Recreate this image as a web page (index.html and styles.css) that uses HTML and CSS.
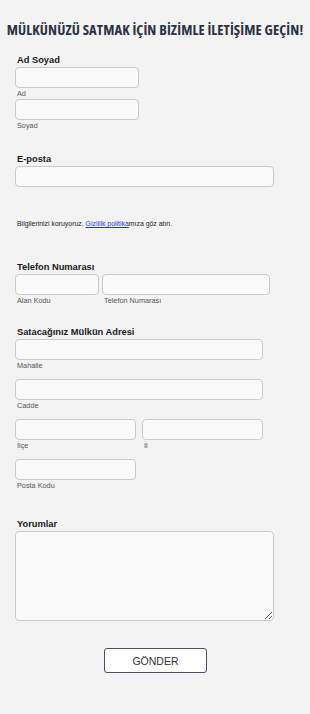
FILE: index.html
```html
<!DOCTYPE html>
<html lang="tr">
<head>
	<meta charset="UTF-8">
	<title>İletişim</title>
	<link rel="stylesheet" href="styles.css">
</head>
<body>
	<div class="page">
		<h1 class="title">MÜLKÜNÜZÜ SATMAK İÇİN BİZİMLE İLETİŞİME GEÇİN!</h1>
		<form class="form">
			<div class="section sec-name">
				<div class="label">Ad Soyad</div>
				<input type="text" class="input half">
				<div class="sub">Ad</div>
				<input type="text" class="input half">
				<div class="sub">Soyad</div>
			</div>

			<div class="section sec-mail">
				<div class="label">E-posta</div>
				<input type="text" class="input full">
			</div>

			<p class="privacy">Bilgilerinizi koruyoruz. <a href="#">Gizlilik politika</a>mıza göz atın.</p>

			<div class="section sec-phone">
				<div class="label">Telefon Numarası</div>
				<div class="row phone">
					<div class="col code">
						<input type="text" class="input">
						<div class="sub">Alan Kodu</div>
					</div>
					<div class="col num">
						<input type="text" class="input">
						<div class="sub">Telefon Numarası</div>
					</div>
				</div>
			</div>

			<div class="section sec-addr">
				<div class="label">Satacağınız Mülkün Adresi</div>
				<input type="text" class="input wide">
				<div class="sub">Mahalle</div>
				<input type="text" class="input wide gap">
				<div class="sub">Cadde</div>
				<div class="row city gap">
					<div class="col">
						<input type="text" class="input">
						<div class="sub">İlçe</div>
					</div>
					<div class="col">
						<input type="text" class="input">
						<div class="sub">İl</div>
					</div>
				</div>
				<input type="text" class="input short gap">
				<div class="sub">Posta Kodu</div>
			</div>

			<div class="section sec-notes">
				<div class="label">Yorumlar</div>
				<textarea class="input area"></textarea>
			</div>

			<div class="actions">
				<button type="button" class="submit">GÖNDER</button>
			</div>
		</form>
	</div>
</body>
</html>
```

FILE: styles.css
```css
*{
	margin: 0;
	padding: 0;
	box-sizing: border-box;
}
body{
	background-color: #f3f3f3;
	font-family: "Liberation Sans", Arial, sans-serif;
	color: #1b1b1b;
}
.page{
	width: 310px;
	padding-top: 21px;
}
.title{
	font-family: "Open Sans", sans-serif;
	font-size: 14.5px;
	font-weight: 700;
	font-stretch: 85%;
	letter-spacing: 0.1px;
	line-height: 18px;
	color: #2c3345;
	text-align: center;
	white-space: nowrap;
}
.form{
	padding: 0 15px;
}
.section{
	display: flex;
	flex-direction: column;
	align-items: flex-start;
}
.sec-name{
	margin-top: 15px;
}
.sec-mail{
	margin-top: 22px;
}
.sec-phone{
	margin-top: 33px;
}
.sec-addr{
	margin-top: 20px;
}
.sec-notes{
	margin-top: 27px;
}
.label{
	font-size: 9.3px;
	font-weight: 700;
	line-height: 12px;
	padding-left: 2px;
	margin-bottom: 1px;
}
.sub{
	font-size: 7.3px;
	line-height: 10px;
	margin-top: 1px;
	padding-left: 2px;
	color: #555;
}
.input{
	display: block;
	height: 21px;
	border: 1px solid #c9c9d1;
	border-radius: 4px;
	background-color: #fafafa;
	outline: none;
}
.half{
	width: 124px;
}
.short{
	width: 121px;
}
.full{
	width: 259px;
}
.wide{
	width: 248px;
}
.gap{
	margin-top: 8px;
}
.row{
	display: flex;
	align-self: stretch;
}
.phone{
	gap: 3px;
	width: 255px;
}
.phone .code{
	width: 84px;
}
.phone .num{
	flex: 1;
}
.city{
	gap: 6px;
	width: 248px;
}
.city .col{
	flex: 1;
}
.col .input{
	width: 100%;
}
.privacy{
	margin-top: 33px;
	padding-left: 2px;
	font-size: 6.9px;
	line-height: 8px;
	color: #222;
}
.privacy a{
	color: #1a38e6;
	text-decoration: underline;
}
.area{
	width: 259px;
	height: 90px;
	resize: vertical;
}
.actions{
	display: flex;
	justify-content: center;
	padding-top: 27px;
	padding-bottom: 40px;
}
.submit{
	width: 103px;
	height: 25px;
	border: 1.5px solid #4b5066;
	border-radius: 3px;
	background-color: #fff;
	font-family: "Liberation Sans", Arial, sans-serif;
	font-size: 10.5px;
	color: #333;
	margin-left: 1px;
}
```
